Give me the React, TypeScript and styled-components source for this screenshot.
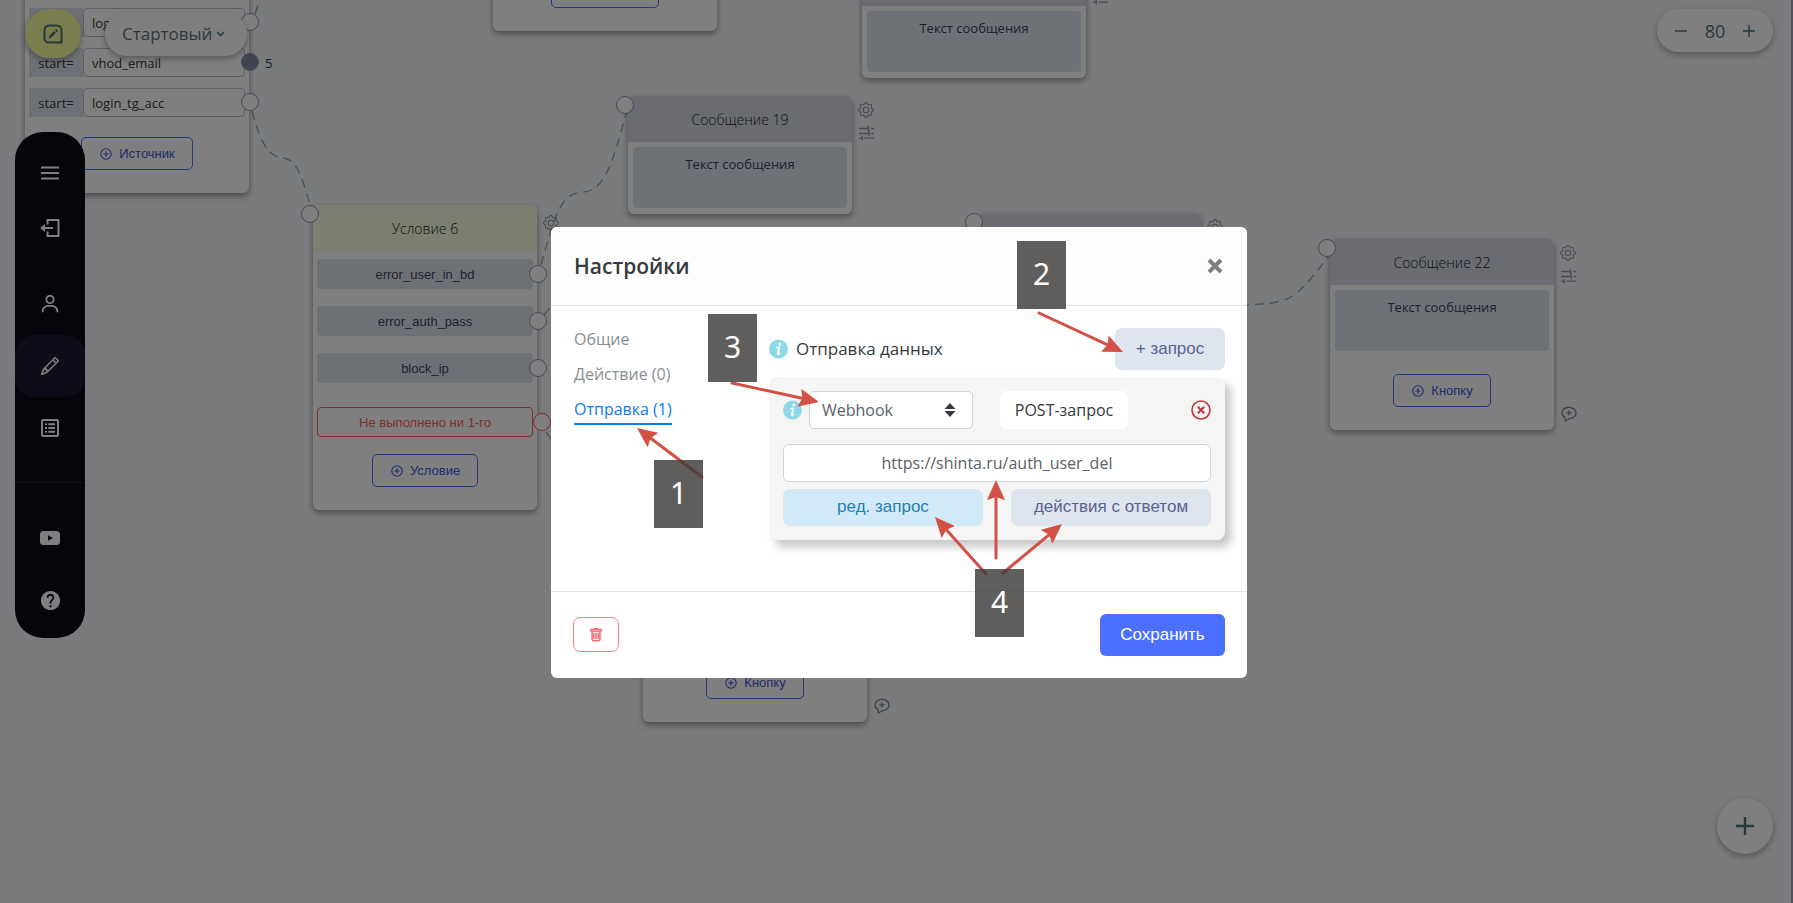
import React from "react";
import styled, { createGlobalStyle, css } from "styled-components";
import { BsGear, BsPencil, BsTrash } from "react-icons/bs";
import { BiUser } from "react-icons/bi";
import { MdHelp } from "react-icons/md";

const ui = `"Open Sans", "Noto Sans", sans-serif`;
const arial = `"Liberation Sans", Arial, sans-serif`;

const GlobalStyle = createGlobalStyle`
  *, *::before, *::after { box-sizing: border-box; }
  body { margin: 0; font-family: ${ui}; font-size: 16px; color: #343a40; }
  button, input, select { font: inherit; margin: 0; }
  button { cursor: pointer; }
`;

/* ---------- board ---------- */

const Board = styled.main`
  position: relative;
  min-height: 100vh;
  overflow: hidden;
  background: #f5f6f9;
  border-right: 2px solid #a9a9b8;
`;

const Links = styled.svg`
  position: absolute;
  inset: 0;
  width: 100%;
  height: 100%;
  fill: none;
  stroke: #98a2a8;
  stroke-width: 1.3;
  stroke-dasharray: 9 6;
`;

const Node = styled.article<{ $x: number; $y: number }>`
  position: absolute;
  left: ${(p) => p.$x}px;
  top: ${(p) => p.$y}px;
  width: 224px;
  border-radius: 6px;
  background: #fff;
  box-shadow: 0 3px 6px rgba(0, 0, 0, 0.4);
`;

const NodeHead = styled.header<{ $tone?: "lime" }>`
  height: 46px;
  display: flex;
  align-items: center;
  justify-content: center;
  border-radius: 6px 6px 0 0;
  background: ${(p) => (p.$tone === "lime" ? "#f8fedf" : "#d4d9e4")};
  font-size: 14px;
  font-weight: 300;
  color: #20242a;
`;

const NodeBody = styled.div<{ $gap?: number }>`
  display: flex;
  flex-direction: column;
  align-items: center;
  gap: ${(p) => p.$gap ?? 17}px;
  padding: 8px 4px 23px;
`;

const MessageBody = styled.div<{ $roomy?: boolean }>`
  display: flex;
  flex-direction: column;
  align-items: center;
  gap: 23px;
  padding: 5px 5px ${(p) => (p.$roomy ? 23 : 6)}px;
`;

const MessageText = styled.div`
  width: 100%;
  height: 61px;
  padding-top: 8px;
  border-radius: 4px;
  background: #dde4ec;
  text-align: center;
  font-size: 13px;
  line-height: 18px;
  color: #3b4064;
`;

const Port = styled.span<{ $place?: "in" | "out" | "row" | "edge"; $filled?: boolean; $danger?: boolean }>`
  position: absolute;
  width: 18px;
  height: 18px;
  border-radius: 50%;
  border: 1px solid ${(p) => (p.$danger ? "#ff5c5c" : "#8a93a8")};
  background: ${(p) => (p.$filled ? "#7f89a3" : "#fff")};
  ${(p) =>
    (p.$place === "in" && css`left: -12px; top: 0;`) ||
    (p.$place === "edge" && css`right: -19px; top: 5px;`) ||
    (p.$place === "row" && css`right: -14px; top: 5px;`) ||
    css`right: -14px; top: 6px;`}
`;

const Row = styled.div`
  position: relative;
  width: 216px;
  height: 30px;
  display: flex;
  align-items: center;
  justify-content: center;
  border-radius: 4px;
`;

const Condition = styled(Row)`
  background: #dbe2ec;
  font-family: ${arial};
  font-size: 13px;
  color: #3f455c;
`;

const Fallback = styled(Row)`
  margin-top: 7px;
  border: 1px solid #ff5c5c;
  font-family: ${arial};
  font-size: 13px;
  color: #ff5c5c;
`;

const SourceRow = styled(Row)`
  height: 29px;
  font-size: 13px;
  color: #343a40;
`;

const SourceKey = styled.label`
  width: 54px;
  height: 29px;
  line-height: 31px;
  text-align: center;
  background: #dbe2ec;
`;

const SourceInput = styled.input`
  flex: 1;
  min-width: 0;
  height: 29px;
  padding: 0 8px;
  border: 1px solid #b9c1cf;
  border-radius: 4px;
  background: #fff;
  color: #343a40;
`;

const PortCount = styled.span`
  position: absolute;
  left: 236px;
  top: 6px;
`;

const AddButton = styled.button<{ $top?: number }>`
  display: flex;
  align-items: center;
  gap: 7px;
  height: 33px;
  margin-top: ${(p) => p.$top ?? 0}px;
  padding: 0 17px 0 18px;
  border: 1px solid #4c6fff;
  border-radius: 5px;
  background: transparent;
  font-family: ${arial};
  font-size: 13px;
  color: #4459d8;
`;

const Tools = styled.div<{ $top?: number }>`
  position: absolute;
  left: 230px;
  top: ${(p) => p.$top ?? 6}px;
  display: flex;
  flex-direction: column;
  gap: 8px;
  color: #90959a;
`;

const CommentTool = styled.div`
  position: absolute;
  left: 231px;
  bottom: 3px;
  color: #858a90;
`;

/* ---------- floating controls ---------- */

const floating = css`
  position: absolute;
  display: flex;
  align-items: center;
  justify-content: center;
  border: 0;
  background: #fff;
  color: #4f707c;
  box-shadow: 0 3px 6px rgba(0, 0, 0, 0.3);
`;

const EditFab = styled.button`
  ${floating}
  left: 25px;
  top: 9px;
  width: 56px;
  height: 49px;
  border-radius: 25px;
  background: #f4fa9a;
`;

const FlowPicker = styled.label`
  ${floating}
  left: 105px;
  top: 12px;
  width: 142px;
  height: 44px;
  border-radius: 22px;
  justify-content: flex-start;
  padding-left: 17px;
`;

const FlowSelect = styled.select`
  appearance: none;
  width: 94px;
  border: 0;
  background: transparent;
  padding: 0;
  font-size: 17px;
  line-height: 24px;
  color: #5f7078;
`;

const ZoomBar = styled.div`
  ${floating}
  right: 18px;
  top: 9px;
  width: 116px;
  height: 43px;
  border-radius: 22px;
  gap: 17px;
  font-size: 18px;
`;

const ZoomButton = styled.button`
  display: flex;
  padding: 0;
  border: 0;
  background: transparent;
  color: inherit;
`;

const AddFab = styled.button`
  ${floating}
  right: 18px;
  bottom: 49px;
  width: 56px;
  height: 56px;
  border-radius: 50%;
`;

const Sidebar = styled.nav`
  position: absolute;
  left: 15px;
  top: 132px;
  width: 70px;
  height: 506px;
  display: flex;
  flex-direction: column;
  padding-top: 10px;
  border-radius: 28px;
  background: #0d0b19;
`;

const SideItem = styled.a<{ $active?: boolean; $gap?: number }>`
  flex: none;
  height: 62px;
  margin-top: ${(p) => p.$gap ?? 0}px;
  display: flex;
  align-items: center;
  justify-content: center;
  border-radius: 20px;
  color: #fff;
  background: ${(p) => (p.$active ? "#1c1930" : "transparent")};
`;

const SideRule = styled.hr`
  width: 100%;
  margin: 23px 0 24px;
  border: 0;
  border-top: 1px solid #25232f;
`;

/* ---------- dialog ---------- */

const Backdrop = styled.div`
  position: fixed;
  inset: 0;
  display: flex;
  align-items: center;
  justify-content: center;
  padding: 1px 0 0 5px;
  background: rgba(0, 0, 0, 0.5);
`;

const Dialog = styled.section`
  position: relative;
  width: 696px;
  max-width: 100%;
  border-radius: 6px;
  background: #fff;
`;

const DialogHead = styled.header`
  height: 79px;
  display: flex;
  align-items: center;
  justify-content: space-between;
  padding: 0 23px;
  border-bottom: 1px solid #dee2e6;
  border-radius: 6px 6px 0 0;
  background: #fdfdfd;
`;

const Title = styled.h2`
  margin: 0;
  font-size: 21px;
  font-weight: 600;
  line-height: 28px;
  color: #343a40;
`;

const CloseButton = styled.button`
  display: flex;
  padding: 0;
  border: 0;
  background: transparent;
`;

const DialogBody = styled.div`
  display: flex;
  padding: 22px 22px 51px 23px;
`;

const Tabs = styled.nav`
  width: 195px;
  flex: none;
  display: flex;
  flex-direction: column;
  align-items: flex-start;
  gap: 8px;
`;

const Tab = styled.a<{ $active?: boolean }>`
  height: 27px;
  line-height: 22px;
  text-decoration: none;
  color: ${(p) => (p.$active ? "#0d7bf2" : "#868e96")};
  border-bottom: 2px solid ${(p) => (p.$active ? "#0d7bf2" : "transparent")};
`;

const Content = styled.div`
  flex: 1;
  min-width: 0;
`;

const ContentHead = styled.div`
  display: flex;
  align-items: center;
  justify-content: space-between;
  margin-bottom: 7px;
`;

const Caption = styled.span`
  display: flex;
  align-items: center;
  gap: 8px;
  font-size: 17px;
`;

const softTone = css`
  border: 0;
  border-radius: 7px;
  font-family: ${arial};
  font-size: 17px;
  background: #dee5ef;
  color: #5b6291;
`;

const AddRequest = styled.button`
  ${softTone}
  width: 110px;
  height: 42px;
`;

const RequestCard = styled.div`
  display: flex;
  flex-direction: column;
  padding: 14px;
  border-radius: 8px;
  background: #f5f5f5;
  box-shadow: 6px 7px 8px rgba(0, 0, 0, 0.22);
`;

const RequestTop = styled.div`
  display: flex;
  align-items: center;
  margin-bottom: 15px;
`;

const SelectBox = styled.div`
  position: relative;
  width: 164px;
  margin: 0 27px 0 7px;

  svg {
    position: absolute;
    right: 17px;
    top: 12px;
    pointer-events: none;
  }
`;

const TypeSelect = styled.select`
  appearance: none;
  display: block;
  width: 100%;
  height: 38px;
  padding: 0 12px;
  border: 1px solid #ced4da;
  border-radius: 5px;
  background: #fff;
  color: #5a6168;
`;

const Method = styled.span`
  width: 128px;
  height: 38px;
  line-height: 38px;
  border-radius: 6px;
  background: #fff;
  text-align: center;
`;

const RemoveButton = styled(CloseButton)`
  margin-left: auto;
  color: #c0373d;
`;

const UrlInput = styled.input`
  height: 38px;
  margin-bottom: 7px;
  border: 1px solid #ced4da;
  border-radius: 6px;
  background: #fff;
  text-align: center;
  color: #5a6168;
`;

const Actions = styled.div`
  display: grid;
  grid-template-columns: 1fr 1fr;
  gap: 28px;
`;

const ActionButton = styled.button<{ $info?: boolean }>`
  ${softTone}
  height: 37px;
  ${(p) => p.$info && css`background: #d2eaf7; color: #2380b0;`}
`;

const DialogFoot = styled.footer`
  height: 87px;
  display: flex;
  align-items: center;
  justify-content: space-between;
  padding: 0 22px;
  border-top: 1px solid #dee2e6;
`;

const DeleteButton = styled.button`
  width: 46px;
  height: 35px;
  display: flex;
  align-items: center;
  justify-content: center;
  border: 1px solid #f57c80;
  border-radius: 7px;
  background: #fff;
  color: #f0585e;
`;

const SaveButton = styled.button`
  width: 125px;
  height: 42px;
  border: 0;
  border-radius: 6px;
  background: #4c6fff;
  font-family: ${arial};
  font-size: 17px;
  color: #fff;
`;

/* ---------- step markers over the dialog ---------- */

const Arrows = styled.svg`
  position: absolute;
  inset: 0;
  width: 100%;
  height: 100%;
  pointer-events: none;
  stroke: #d35044;
  stroke-width: 3;
  stroke-linecap: round;
`;

const Step = styled.span<{ $x: number; $y: number }>`
  position: absolute;
  left: ${(p) => p.$x}px;
  top: ${(p) => p.$y}px;
  width: 49px;
  height: 68px;
  line-height: 66px;
  text-align: center;
  font-family: "Noto Sans", sans-serif;
  font-size: 30px;
  color: #fff;
  background: rgba(62, 61, 59, 0.83);
`;

/* ---------- icons ---------- */

const PlusCircle = () => (
  <svg width="12" height="12" viewBox="0 0 12 12" fill="none" stroke="currentColor" strokeWidth="1.1">
    <circle cx="6" cy="6" r="5.2" />
    <path d="M6 3.2v5.6M3.2 6h5.6" />
  </svg>
);

const TuneIcon = () => (
  <svg width="17" height="15" viewBox="0 0 17 15" fill="none" stroke="currentColor" strokeWidth="1.3">
    <path d="M1 2.5h9.5M13 2.5h3M10.5 0v5M1 7.5h10M13.5 7.5H16M11.2 5v5M1 12.2h3M6.500 12.200h9.500M4.200 10v4.600" />
  </svg>
);

const CommentPlus = () => (
  <svg width="16" height="16" viewBox="0 0 16 16" fill="none" stroke="currentColor" strokeWidth="1.4">
    <path d="M4 11.500C2 10.500 1 8.800 1 7c0-3.300 3.100-5.800 7-5.800S15 3.700 15 7s-3.100 5.600-6.600 5.600L4.200 15z" strokeLinejoin="round" />
    <path d="M8 4.200v5.400M5.300 6.900h5.400" />
  </svg>
);

const InfoIcon = () => (
  <svg width="19" height="20" viewBox="0 0 20 20">
    <circle cx="10" cy="10" r="10" fill="#8fd9e6" />
    <circle cx="11.400" cy="4.800" r="1.500" fill="#fff" />
    <path d="M8 8.600l3-.6-1.700 6.700c-.2.900.5.900 1.900-.2" fill="none" stroke="#fff" strokeWidth="1.700" strokeLinecap="round" strokeLinejoin="round" />
  </svg>
);

type MessageProps = {
  x: number;
  y: number;
  title?: string;
  text?: string;
  port?: boolean;
  button?: string;
  comment?: boolean;
};

const MessageNode = ({ x, y, title, text, port, button, comment }: MessageProps) => (
  <Node $x={x} $y={y}>
    <NodeHead>{title}</NodeHead>
    <MessageBody $roomy={Boolean(button)}>
      <MessageText>{text}</MessageText>
      {button && (
        <AddButton>
          <PlusCircle />
          {button}
        </AddButton>
      )}
    </MessageBody>
    {port && <Port $place="in" />}
    <Tools>
      <BsGear size={16} />
      <TuneIcon />
    </Tools>
    {comment && (
      <CommentTool>
        <CommentPlus />
      </CommentTool>
    )}
  </Node>
);

const sources = ["login_email", "vhod_email", "login_tg_acc"];
const conditions = ["error_user_in_bd", "error_auth_pass", "block_ip"];

/* start x, start y, tip x, tip y, in the dialog's own coordinates */
const arrows = [
  [151, 250, 86, 201],
  [488, 86, 572, 125],
  [181, 156, 268, 175],
  [435, 347, 384, 290],
  [445, 331, 445, 253],
  [452, 346, 511, 297],
];

const Arrow = ({ from, tip }: { from: number[]; tip: number[] }) => {
  const dx = tip[0] - from[0];
  const dy = tip[1] - from[1];
  const keep = 1 - 8 / Math.hypot(dx, dy);
  return (
    <line x1={from[0]} y1={from[1]} x2={from[0] + dx * keep} y2={from[1] + dy * keep} markerEnd="url(#head)" />
  );
};

export default function App() {
  return (
    <>
      <GlobalStyle />
      <Board>
        <Links aria-hidden="true">
          <path d="M255 14C257 8 259 2 262-6" />
          <path d="M252 111C262 150 272 157 283 158S300 168 310 205" />
          <path d="M541 265C556 210 562 193 583 192S612 165 626 114" />
          <path d="M544 315L560 296M546 432L560 452" />
          <path d="M1240 305C1290 303 1292 304 1328 257" />
        </Links>

        <Node $x={25} $y={-46}>
          <NodeHead />
          <NodeBody $gap={11}>
            {sources.map((name, i) => (
              <SourceRow key={name}>
                <SourceKey htmlFor={name}>{i > 0 && "start="}</SourceKey>
                <SourceInput id={name} aria-label={name} defaultValue={name} />
                <Port $place="row" $filled={i === 1} />
                {i === 1 && <PortCount>5</PortCount>}
              </SourceRow>
            ))}
            <AddButton $top={9}>
              <PlusCircle />
              Источник
            </AddButton>
          </NodeBody>
        </Node>

        <Node $x={493} $y={-33}>
          <NodeBody $gap={0}>
            <AddButton aria-label="Добавить">
              <svg width="71" height="12" />
            </AddButton>
          </NodeBody>
        </Node>
        <MessageNode x={862} y={-40} text="Текст сообщения" />
        <MessageNode x={628} y={96} title="Сообщение 19" text="Текст сообщения" port />
        <MessageNode x={977} y={213} port />
        <MessageNode x={1330} y={239} title="Сообщение 22" text="Текст сообщения" button="Кнопку" port comment />
        <MessageNode x={643} y={531} button="Кнопку" comment />

        <Node $x={313} $y={205}>
          <NodeHead $tone="lime">Условие 6</NodeHead>
          <NodeBody>
            {conditions.map((name) => (
              <Condition key={name}>
                {name}
                <Port />
              </Condition>
            ))}
            <Fallback>
              Не выполнено ни 1-го
              <Port $place="edge" $danger />
            </Fallback>
            <AddButton>
              <PlusCircle />
              Условие
            </AddButton>
          </NodeBody>
          <Port $place="in" />
          <Tools $top={10}>
            <BsGear size={16} />
          </Tools>
        </Node>

        <EditFab aria-label="Редактор">
          <svg width="20" height="20" viewBox="0 0 20 20" fill="none" stroke="currentColor" strokeWidth="2">
            <path d="M6 1.500h8a4.500 4.500 0 0 1 4.500 4.500v12.500H6A4.500 4.500 0 0 1 1.500 14V6A4.500 4.500 0 0 1 6 1.500z" strokeLinejoin="round" />
            <path d="M5.600 14.400l.6-2.600 4.800-4.700 2 2-4.800 4.700z" fill="currentColor" stroke="none" />
            <path d="M12 6.200l1.300-1.200 1.900 1.900L13.900 8.200z" fill="currentColor" stroke="none" />
          </svg>
        </EditFab>
        <FlowPicker>
          <FlowSelect aria-label="Сценарий">
            <option>Стартовый</option>
          </FlowSelect>
          <svg width="9" height="7" viewBox="0 0 9 7" fill="none" stroke="currentColor" strokeWidth="1.600">
            <path d="M1 1l3.500 3.500L8 1" />
          </svg>
        </FlowPicker>
        <ZoomBar>
          <ZoomButton aria-label="Уменьшить">
            <svg width="14" height="14" viewBox="0 0 14 14" stroke="currentColor" strokeWidth="1.500"><path d="M1 7h12" /></svg>
          </ZoomButton>
          80
          <ZoomButton aria-label="Увеличить">
            <svg width="14" height="14" viewBox="0 0 14 14" stroke="currentColor" strokeWidth="1.500"><path d="M1 7h12M7 1v12" /></svg>
          </ZoomButton>
        </ZoomBar>
        <AddFab aria-label="Добавить блок">
          <svg width="20" height="20" viewBox="0 0 20 20" stroke="currentColor" strokeWidth="2.400"><path d="M1 10h18M10 1v18" /></svg>
        </AddFab>

        <Sidebar>
          <SideItem href="#menu" aria-label="Меню">
            <svg width="18" height="14" viewBox="0 0 18 14" stroke="currentColor" strokeWidth="2.200"><path d="M0 1.500h18M0 7h18M0 12.500h18" /></svg>
          </SideItem>
          <SideItem href="#exit" aria-label="Выход" $gap={-7}>
            <svg width="20" height="18" viewBox="0 0 20 18" fill="none" stroke="currentColor" strokeWidth="2">
              <path d="M7.500 5.500V1h11v16h-11v-4.500" strokeLinejoin="round" />
              <path d="M4 9h9" />
              <path d="M0 9l5-4v8z" fill="currentColor" stroke="none" />
            </svg>
          </SideItem>
          <SideItem href="#profile" aria-label="Профиль" $gap={14}>
            <BiUser size={22} />
          </SideItem>
          <SideItem href="#editor" aria-label="Редактор" $active>
            <BsPencil size={18} strokeWidth={0.5} />
          </SideItem>
          <SideItem href="#list" aria-label="Список">
            <svg width="18" height="18" viewBox="0 0 18 18" fill="none" stroke="currentColor" strokeWidth="2">
              <rect x="1" y="1" width="16" height="16" rx="1" />
              <path d="M4 5.200h2M7.300 5.200H14M4 9h2M7.300 9H14M4 12.800h2M7.300 12.800H14" />
            </svg>
          </SideItem>
          <SideRule />
          <SideItem href="#video" aria-label="Видео">
            <svg width="20" height="14" viewBox="0 0 20 14">
              <rect width="20" height="14" rx="3.500" fill="currentColor" />
              <path d="M8 4.200v5.600L12.800 7z" fill="#0d0b19" />
            </svg>
          </SideItem>
          <SideItem href="#help" aria-label="Помощь">
            <MdHelp size={23} />
          </SideItem>
        </Sidebar>
      </Board>

      <Backdrop>
        <Dialog role="dialog" aria-labelledby="settings-title">
          <DialogHead>
            <Title id="settings-title">Настройки</Title>
            <CloseButton aria-label="Закрыть">
              <svg width="18" height="18" viewBox="0 0 18 18" stroke="#7f7f7f" strokeWidth="4"><path d="M3 3l12 12M15 3L3 15" /></svg>
            </CloseButton>
          </DialogHead>
          <DialogBody>
            <Tabs>
              <Tab href="#general">Общие</Tab>
              <Tab href="#action">Действие (0)</Tab>
              <Tab href="#send" $active>Отправка (1)</Tab>
            </Tabs>
            <Content>
              <ContentHead>
                <Caption>
                  <InfoIcon />
                  Отправка данных
                </Caption>
                <AddRequest>+ запрос</AddRequest>
              </ContentHead>
              <RequestCard>
                <RequestTop>
                  <InfoIcon />
                  <SelectBox>
                    <TypeSelect aria-label="Тип запроса">
                      <option>Webhook</option>
                    </TypeSelect>
                    <svg width="12" height="14" viewBox="0 0 12 14" fill="#343a40"><path d="M6 0l5.500 6H.5zM6 14L.5 8h11z" /></svg>
                  </SelectBox>
                  <Method>POST-запрос</Method>
                  <RemoveButton aria-label="Удалить запрос">
                    <svg width="20" height="20" viewBox="0 0 20 20" fill="none" stroke="currentColor" strokeWidth="1.600">
                      <circle cx="10" cy="10" r="9" />
                      <path d="M6.800 6.800l6.400 6.400M13.200 6.800l-6.400 6.400" strokeWidth="2" />
                    </svg>
                  </RemoveButton>
                </RequestTop>
                <UrlInput aria-label="Адрес" defaultValue="https://shinta.ru/auth_user_del" />
                <Actions>
                  <ActionButton $info>ред. запрос</ActionButton>
                  <ActionButton>действия с ответом</ActionButton>
                </Actions>
              </RequestCard>
            </Content>
          </DialogBody>
          <DialogFoot>
            <DeleteButton aria-label="Удалить">
              <BsTrash size={14} strokeWidth={0.5} />
            </DeleteButton>
            <SaveButton>Сохранить</SaveButton>
          </DialogFoot>

          <Arrows aria-hidden="true">
            <defs>
              <marker id="head" viewBox="0 0 20 18" markerWidth="20" markerHeight="18" refX="12" refY="9" orient="auto" markerUnits="userSpaceOnUse">
                <path d="M0 0L20 9L0 18L3 9z" fill="#d35044" stroke="none" />
              </marker>
            </defs>
            {arrows.map(([x1, y1, x2, y2]) => (
              <Arrow key={`${x1}-${y1}`} from={[x1, y1]} tip={[x2, y2]} />
            ))}
          </Arrows>
          <Step $x={103} $y={233}>1</Step>
          <Step $x={466} $y={14}>2</Step>
          <Step $x={157} $y={87}>3</Step>
          <Step $x={424} $y={342}>4</Step>
        </Dialog>
      </Backdrop>
    </>
  );
}
